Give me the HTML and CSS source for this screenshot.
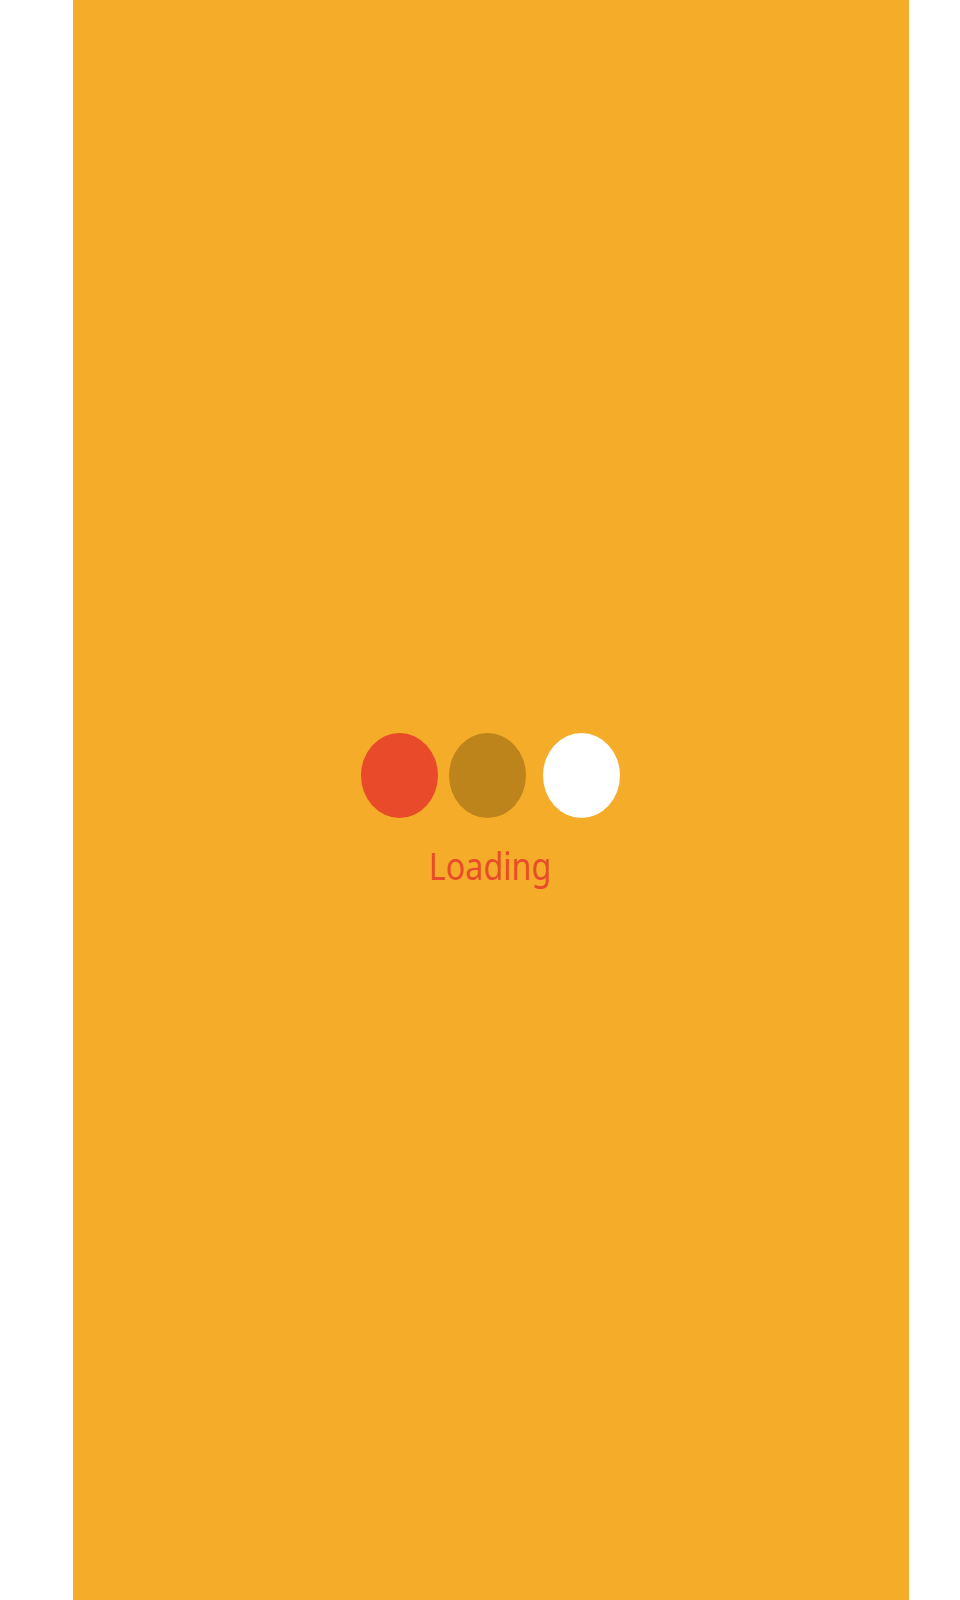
FILE: index.html
```html
<!DOCTYPE html>
<html lang="en">
<head>
<meta charset="utf-8">
<title>Loading</title>
<link rel="stylesheet" href="styles.css">
</head>
<body>
<div class="panel">
  <div class="loader">
    <div class="dots">
      <span class="dot dot-red"></span>
      <span class="dot dot-brown"></span>
      <span class="dot dot-white"></span>
    </div>
    <div class="label">Loading</div>
  </div>
</div>
</body>
</html>
```

FILE: styles.css
```css
html, body {
  margin: 0;
  padding: 0;
  background: #ffffff;
}

.panel {
  margin-left: 73px;
  width: 836px;
  height: 1600px;
  background: #f5ac28;
  display: flex;
  flex-direction: column;
  align-items: center;
}

.loader {
  padding-top: 733px;
  display: flex;
  flex-direction: column;
  align-items: center;
  margin-left: -2px;
}

.dots {
  display: flex;
  align-items: center;
}

.dot {
  display: block;
  width: 77px;
  height: 85px;
  border-radius: 50%;
}

.dot-red {
  background: #e94a2a;
}

.dot-brown {
  background: #be841c;
  margin-left: 11px;
}

.dot-white {
  background: #ffffff;
  margin-left: 17px;
}

.label {
  margin-top: 28px;
  font-family: "Noto Sans", "Open Sans", sans-serif;
  font-size: 38px;
  line-height: 38px;
  color: #e84d2a;
  transform: scaleX(0.85);
}
```
